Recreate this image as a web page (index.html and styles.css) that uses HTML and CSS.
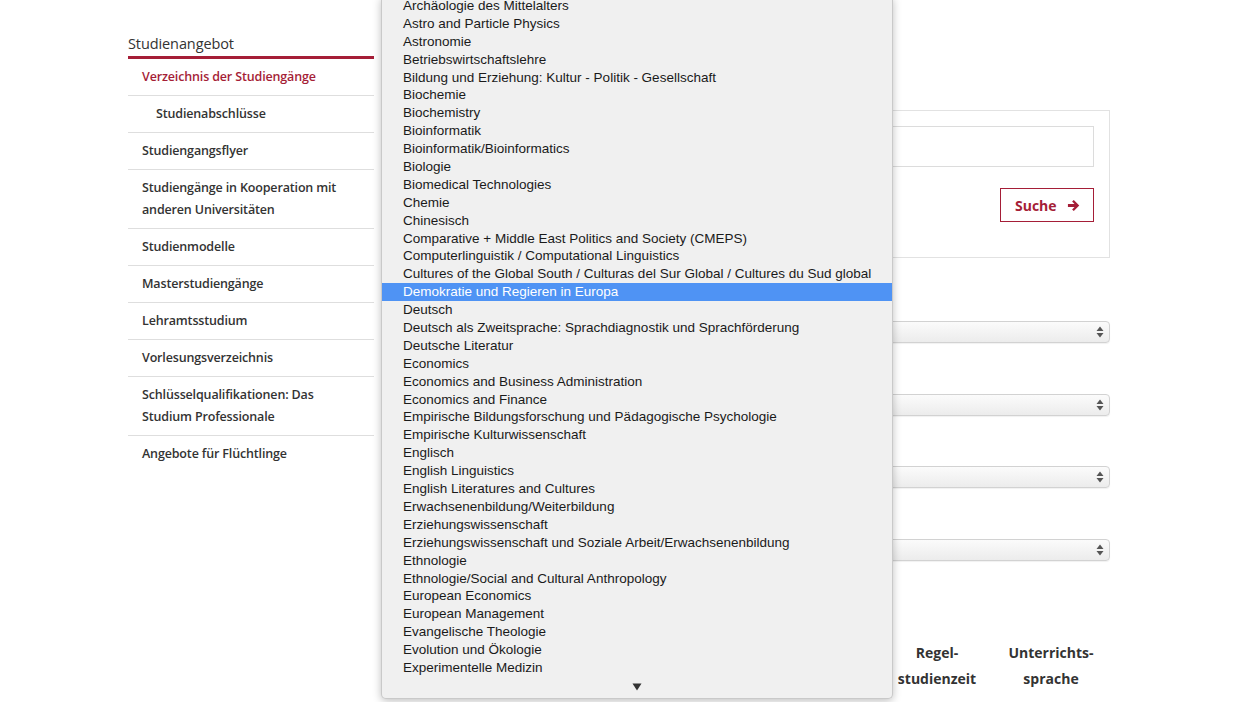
FILE: index.html
```html
<!doctype html>
<html lang="de">

<head>
  <title>Verzeichnis der Studiengänge</title>
  <meta charset="utf-8" />
  <link rel="stylesheet" href="styles.css">
</head>

<body>
  <div class="page">
    <nav class="sidebar">
      <div class="sidebar-title">Studienangebot</div>
      <ul class="subnav">
        <li class="active">Verzeichnis der Studiengänge</li>
        <li class="sub">Studienabschlüsse</li>
        <li>Studiengangsflyer</li>
        <li>Studiengänge in Kooperation mit anderen Universitäten</li>
        <li>Studienmodelle</li>
        <li>Masterstudiengänge</li>
        <li>Lehramtsstudium</li>
        <li>Vorlesungsverzeichnis</li>
        <li>Schlüsselqualifikationen: Das Studium Professionale</li>
        <li>Angebote für Flüchtlinge</li>
      </ul>
    </nav>

    <main class="content">
      <form class="search-box">
        <input class="search-input" type="text" />
        <div class="search-actions">
          <button class="btn-search" type="submit">
            Suche
            <svg width="13" height="13" viewBox="0 0 14 14"><path d="M1 5.4h7.1L5.5 2.8 7.3 1 13.2 7l-5.9 6-1.8-1.8 2.6-2.6H1z" fill="currentColor"/></svg>
          </button>
        </div>
      </form>

      <div class="filters">
        <div class="select-wrap"><select class="filter"></select><svg class="updown" width="8" height="12" viewBox="0 0 8 12"><path d="M4 0.5 7.5 5h-7zM4 11.5 0.5 7h7z" fill="#555"/></svg></div>
        <div class="select-wrap"><select class="filter"></select><svg class="updown" width="8" height="12" viewBox="0 0 8 12"><path d="M4 0.5 7.5 5h-7zM4 11.5 0.5 7h7z" fill="#555"/></svg></div>
        <div class="select-wrap"><select class="filter"></select><svg class="updown" width="8" height="12" viewBox="0 0 8 12"><path d="M4 0.5 7.5 5h-7zM4 11.5 0.5 7h7z" fill="#555"/></svg></div>
        <div class="select-wrap"><select class="filter"></select><svg class="updown" width="8" height="12" viewBox="0 0 8 12"><path d="M4 0.5 7.5 5h-7zM4 11.5 0.5 7h7z" fill="#555"/></svg></div>
      </div>

      <table class="results">
        <thead>
          <tr>
            <th class="col-name"></th>
            <th class="col-time">Regel-<br />studienzeit</th>
            <th class="col-lang">Unterrichts-<br />sprache</th>
          </tr>
        </thead>
      </table>
    </main>
  </div>

  <!-- open native select menu -->
  <ul class="menu">
    <li>Archäologie des Mittelalters</li>
    <li>Astro and Particle Physics</li>
    <li>Astronomie</li>
    <li>Betriebswirtschaftslehre</li>
    <li>Bildung und Erziehung: Kultur - Politik - Gesellschaft</li>
    <li>Biochemie</li>
    <li>Biochemistry</li>
    <li>Bioinformatik</li>
    <li>Bioinformatik/Bioinformatics</li>
    <li>Biologie</li>
    <li>Biomedical Technologies</li>
    <li>Chemie</li>
    <li>Chinesisch</li>
    <li>Comparative + Middle East Politics and Society (CMEPS)</li>
    <li>Computerlinguistik / Computational Linguistics</li>
    <li>Cultures of the Global South / Culturas del Sur Global / Cultures du Sud global</li>
    <li class="selected">Demokratie und Regieren in Europa</li>
    <li>Deutsch</li>
    <li>Deutsch als Zweitsprache: Sprachdiagnostik und Sprachförderung</li>
    <li>Deutsche Literatur</li>
    <li>Economics</li>
    <li>Economics and Business Administration</li>
    <li>Economics and Finance</li>
    <li>Empirische Bildungsforschung und Pädagogische Psychologie</li>
    <li>Empirische Kulturwissenschaft</li>
    <li>Englisch</li>
    <li>English Linguistics</li>
    <li>English Literatures and Cultures</li>
    <li>Erwachsenenbildung/Weiterbildung</li>
    <li>Erziehungswissenschaft</li>
    <li>Erziehungswissenschaft und Soziale Arbeit/Erwachsenenbildung</li>
    <li>Ethnologie</li>
    <li>Ethnologie/Social and Cultural Anthropology</li>
    <li>European Economics</li>
    <li>European Management</li>
    <li>Evangelische Theologie</li>
    <li>Evolution und Ökologie</li>
    <li>Experimentelle Medizin</li>
    <li class="scroll-down"><svg width="10" height="8" viewBox="0 0 10 8"><path d="M0.5 0.5h9L5 7.5z" fill="#333"/></svg></li>
  </ul>
</body>

</html>
```

FILE: styles.css
```css
html {
  font-family: "Open Sans", sans-serif;
  color: #333;
}

body {
  margin: 0;
  background: #fff;
}

.page {
  display: flex;
  gap: 30px;
  width: 982px;
  padding: 33px 0 0 128px;
}

/* sidebar */

.sidebar {
  flex: 0 0 246px;
}

.sidebar-title {
  font-size: 14.5px;
  line-height: 22px;
  padding-bottom: 1px;
  border-bottom: 3px solid #a51e37;
  letter-spacing: -0.1px;
}

.subnav {
  list-style: none;
  margin: 0;
  padding: 0;
}

.subnav li {
  font-size: 12.5px;
  font-weight: 600;
  line-height: 22px;
  padding: 7px 14px;
  border-bottom: 1px solid #dedede;
  letter-spacing: -0.15px;
  color: #333;
}

.subnav li:last-child {
  border-bottom: 0;
}

.subnav li.active {
  color: #a51e37;
}

.subnav li.sub {
  padding-left: 28px;
}

/* main column */

.content {
  flex: 1;
}

.search-box {
  margin: 77px 0 0;
  padding: 15px 15px 35px;
  border: 1px solid #e2e2e2;
}

.search-input {
  display: block;
  box-sizing: border-box;
  width: 100%;
  height: 41px;
  border: 1px solid #dcdcdc;
  margin: 0;
}

.search-actions {
  display: flex;
  justify-content: flex-end;
  margin-top: 21px;
}

.btn-search {
  display: flex;
  align-items: center;
  gap: 10px;
  height: 34px;
  width: 94px;
  padding: 0 0 0 14px;
  background: #fff;
  border: 1px solid #a51e37;
  color: #a51e37;
  font-family: "Open Sans", sans-serif;
  font-weight: 700;
  font-size: 14px;
}

.filters {
  display: flex;
  flex-direction: column;
  gap: 50.6px;
  margin-top: 63px;
}

.select-wrap {
  position: relative;
}

.filter {
  display: block;
  width: 100%;
  height: 22px;
  appearance: none;
  border: 1px solid #d2d2d2;
  border-radius: 4px;
  background: linear-gradient(#fbfbfb, #ececec);
  box-shadow: 0 1px 1px rgba(0, 0, 0, 0.06);
}

.updown {
  position: absolute;
  right: 6px;
  top: 5px;
}

.results {
  width: 100%;
  border-collapse: collapse;
  margin-top: 71px;
}

.results th {
  font-size: 14px;
  font-weight: 700;
  line-height: 26px;
  text-align: center;
  padding: 8px 0;
  color: #333;
}

.col-time {
  width: 110px;
}

.col-lang {
  width: 118px;
}

/* native dropdown menu */

.menu {
  position: absolute;
  top: -3px;
  left: 381px;
  width: 510px;
  margin: 0;
  padding: 0;
  list-style: none;
  background: #f0f0f0;
  border: 1px solid #c9c9c9;
  border-top: 0;
  border-radius: 0 0 5px 5px;
  box-shadow: 0 2px 8px rgba(0, 0, 0, 0.25);
  font-family: "Liberation Sans", Arial, sans-serif;
  font-size: 13.5px;
  color: #1a1a1a;
}

.menu li {
  height: 17.9px;
  line-height: 17.9px;
  padding-left: 21px;
  white-space: nowrap;
}

.menu li.selected {
  background: #4f93f4;
  color: #fff;
}

.menu li.scroll-down {
  height: 21px;
  padding: 0;
  display: flex;
  justify-content: center;
  align-items: center;
}
```
